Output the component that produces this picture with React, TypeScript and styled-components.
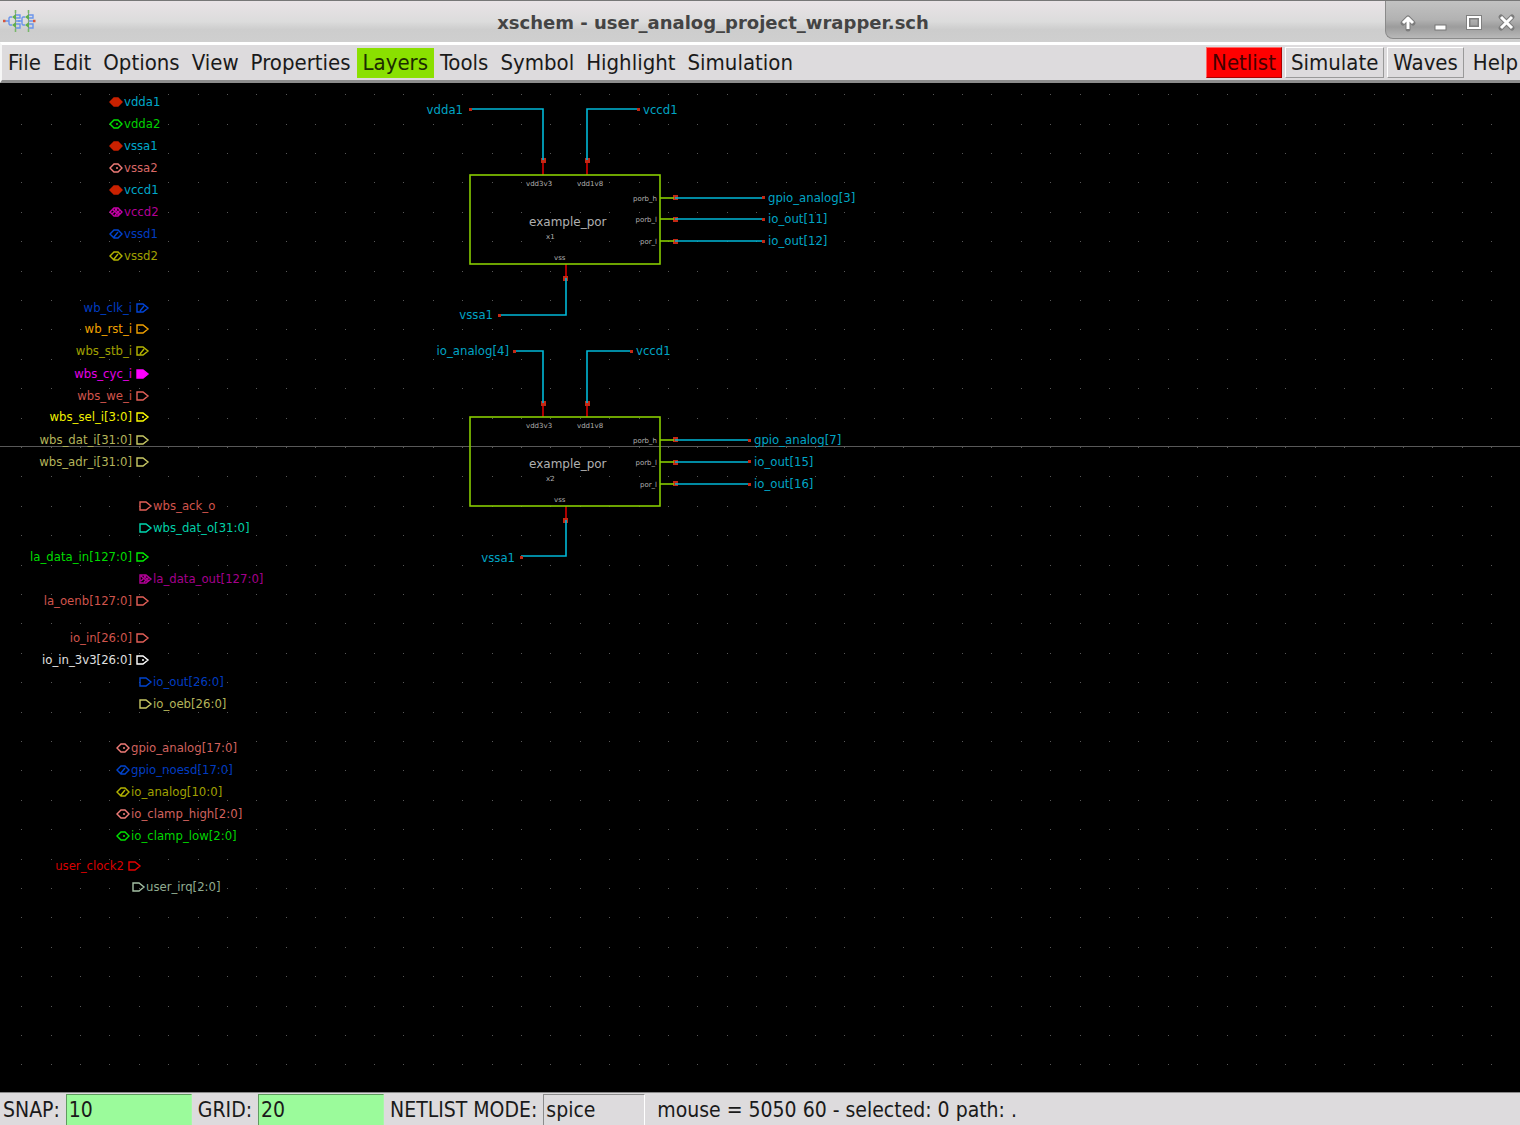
import React from "react";
import styled, { createGlobalStyle } from "styled-components";

const GlobalStyle = createGlobalStyle`
  * { box-sizing: border-box; }
  html, body { margin: 0; padding: 0; background: #000; }
  body { font-family: "DejaVu Sans Condensed", "DejaVu Sans", sans-serif; color: #1a1a1a; }
`;

const Window = styled.div`
  display: flex;
  flex-direction: column;
  min-height: 100vh;
  background: #000;
`;

const TitleBar = styled.header`
  display: flex;
  align-items: flex-start;
  height: 42px;
  background: linear-gradient(#e9e3e6 0, #dcdcdc 50%, #cdcdcd 70%, #cfcfcf 100%);
  border-top: 1px solid #777;
`;

const AppIcon = styled.svg`
  flex: none;
  width: 36px;
  height: 40px;
`;

const Title = styled.h1`
  flex: 1;
  margin: 0;
  padding-left: 5px;
  text-align: center;
  font: bold 18px/43px "DejaVu Sans", sans-serif;
  color: #444;
  white-space: nowrap;
`;

const WindowControls = styled.div`
  display: flex;
  align-items: center;
  height: 38px;
  padding-left: 8px;
  border-left: 1px solid #8a8a8a;
  border-bottom: 1px solid #8a8a8a;
  border-bottom-left-radius: 8px;
  background: linear-gradient(#c2c2c2 0, #b2b2b2 50%, #9c9c9c 70%, #b8b8b8 100%);
`;

const ControlButton = styled.button`
  width: 33px;
  height: 36px;
  padding: 0;
  border: 0;
  background: none;
  &:last-child { width: 27px; }
  svg { display: block; width: 28px; height: 36px; }
`;

const MenuBar = styled.nav`
  display: flex;
  align-items: center;
  height: 41px;
  background: #dddbdd;
  border-top: 3px solid #fff;
  border-left: 2px solid #f6f6f6;
  border-bottom: 3px solid #8c8c8c;
`;

const MenuItem = styled.button<{ $active?: boolean }>`
  height: 30px;
  margin: 0;
  padding: 0 5px;
  border: 1px solid ${(p) => (p.$active ? "#8de000" : "transparent")};
  background: ${(p) => (p.$active ? "#8ae000" : "none")};
  font: 22px/26px "DejaVu Sans Condensed", "DejaVu Sans", sans-serif;
  color: ${(p) => (p.$active ? "#1c2c00" : "#1a1a1a")};
  white-space: nowrap;
  &:last-child { padding-right: 1px; }
`;

const Spacer = styled.div`
  flex: 1;
`;

const ActionButton = styled.button<{ $alert?: boolean }>`
  height: 31px;
  margin: 0 3px 0 0;
  padding: 0 5px;
  border: 1px solid;
  border-color: ${(p) => (p.$alert ? "#f66 #a00 #a00 #f66" : "#fff #999 #999 #fff")};
  background: ${(p) => (p.$alert ? "#ff0000" : "#dddbdd")};
  font: 22px/26px "DejaVu Sans Condensed", "DejaVu Sans", sans-serif;
  color: ${(p) => (p.$alert ? "#400" : "#1a1a1a")};
  white-space: nowrap;
`;

const Canvas = styled.main`
  display: flex;
  flex: 1;
  min-height: 820px;
  overflow: hidden;
`;

const Schematic = styled.svg`
  flex: 1;
  width: 100%;
  shape-rendering: crispEdges;
`;

const PinText = styled.text`
  font: 13px "DejaVu Sans Condensed", "DejaVu Sans", sans-serif;
`;

const SymbolName = styled.text`
  font: 12px "DejaVu Sans", sans-serif;
  fill: #b0b0b0;
`;

const SymbolText = styled.text`
  font: 7px "DejaVu Sans", sans-serif;
  fill: #b0b0b0;
`;

const StatusBar = styled.footer`
  display: flex;
  align-items: flex-start;
  height: 33px;
  padding: 1px 0 0 3px;
  background: #dddbdd;
  border-top: 1px solid #888;
  font-size: 21px;
  line-height: 32px;
  white-space: nowrap;
`;

const Field = styled.input<{ $plain?: boolean; $width: number }>`
  width: ${(p) => p.$width}px;
  height: 32px;
  margin: 0 6px;
  padding: 0 2px;
  border: 1px solid;
  border-color: ${(p) => (p.$plain ? "#8c8c8c #fff #fff #8c8c8c" : "#5f9a5f #a8f8a8 #a8f8a8 #5f9a5f")};
  border-radius: 0;
  outline: 0;
  background: ${(p) => (p.$plain ? "#dddbdd" : "#9bfb9b")};
  font: 21px/30px "DejaVu Sans Condensed", "DejaVu Sans", sans-serif;
  color: #1a1a1a;
`;

const Message = styled.output`
  padding-left: 6px;
`;

/* Canvas coordinates are window coordinates with the title and menu bars taken off. */
const TOP = 83;

type Kind = "io" | "in" | "out";
type Fill = "none" | "solid" | "hatch" | "slash" | "dot";
type Pin = { kind: Kind; name: string; x: number; y: number; color: string; shape: string; fill: Fill };

const pin = (kind: Kind, name: string, x: number, y: number, color: string, shape = color, fill: Fill = "none"): Pin => ({
  kind, name, x, y, color, shape, fill,
});

const pins: Pin[] = [
  pin("io", "vdda1", 116, 102, "#00a8ca", "#c92100", "solid"),
  pin("io", "vdda2", 116, 124, "#00d000", "#00e400", "dot"),
  pin("io", "vssa1", 116, 146, "#00a8ca", "#c92100", "solid"),
  pin("io", "vssa2", 116, 168, "#d86866", "#f07c78", "dot"),
  pin("io", "vccd1", 116, 190, "#00a8ca", "#c92100", "solid"),
  pin("io", "vccd2", 116, 212, "#b40096", "#c800a8", "hatch"),
  pin("io", "vssd1", 116, 234, "#003cc0", "#0044d0", "slash"),
  pin("io", "vssd2", 116, 256, "#a0a000", "#b4b400", "slash"),
  pin("in", "wb_clk_i", 142, 308, "#003cc0", "#0044d8", "slash"),
  pin("in", "wb_rst_i", 142, 329, "#f0a000", "#f0a000"),
  pin("in", "wbs_stb_i", 142, 351, "#a0a000", "#b4b400", "slash"),
  pin("in", "wbs_cyc_i", 142, 374, "#e400e4", "#ff00ff", "solid"),
  pin("in", "wbs_we_i", 142, 396, "#d0544c", "#e46058"),
  pin("in", "wbs_sel_i[3:0]", 142, 417, "#f0f000", "#ffff00", "dot"),
  pin("in", "wbs_dat_i[31:0]", 142, 440, "#b4b45a", "#c8c864"),
  pin("in", "wbs_adr_i[31:0]", 142, 462, "#b4b45a", "#c8c864"),
  pin("out", "wbs_ack_o", 145, 506, "#d0544c", "#e46058"),
  pin("out", "wbs_dat_o[31:0]", 145, 528, "#00d0a8", "#00d8b0"),
  pin("in", "la_data_in[127:0]", 142, 557, "#00dc00", "#00f000", "dot"),
  pin("out", "la_data_out[127:0]", 145, 579, "#a4008c", "#b40098", "hatch"),
  pin("in", "la_oenb[127:0]", 142, 601, "#d0544c", "#e46058"),
  pin("in", "io_in[26:0]", 142, 638, "#d0544c", "#e46058"),
  pin("in", "io_in_3v3[26:0]", 142, 660, "#e0e0e0", "#ffffff", "dot"),
  pin("out", "io_out[26:0]", 145, 682, "#003cc0", "#0044d0"),
  pin("out", "io_oeb[26:0]", 145, 704, "#b4b45a", "#c8c864"),
  pin("io", "gpio_analog[17:0]", 123, 748, "#d0625e", "#f07c78", "dot"),
  pin("io", "gpio_noesd[17:0]", 123, 770, "#003cc0", "#0044d0", "slash"),
  pin("io", "io_analog[10:0]", 123, 792, "#a0a000", "#b4b400", "slash"),
  pin("io", "io_clamp_high[2:0]", 123, 814, "#d0625e", "#f07c78", "dot"),
  pin("io", "io_clamp_low[2:0]", 123, 836, "#00d400", "#00e400", "dot"),
  pin("in", "user_clock2", 134, 866, "#d80000", "#e40000"),
  pin("out", "user_irq[2:0]", 138, 887, "#90ac90", "#a4c0a4"),
];

const outline: Record<Kind, string> = {
  io: "M-6 0 L-2 -4 H2 L6 0 L2 4 H-2 Z",
  in: "M-5 -4 H1 L6 0 L1 4 H-5 Z",
  out: "M-5 -4 H1 L6 0 L1 4 H-5 Z",
};

const marks: Record<Fill, string> = {
  none: "",
  solid: "",
  hatch: "M-4 -3 L3 3 M-1 -3 L4 2 M-4 2 L1 -3 M-1 3 L4 -2",
  slash: "M-2 3 L2 -2",
  dot: "M0 0 H2",
};

function PinMark({ item }: { item: Pin }) {
  const left = item.kind === "in";
  return (
    <g transform={`translate(${item.x} ${item.y - TOP})`}>
      <path
        d={outline[item.kind] + marks[item.fill]}
        fill={item.fill === "solid" ? item.shape : "none"}
        stroke={item.shape}
        strokeWidth={1.4}
        shapeRendering="auto"
      />
      <PinText x={left ? -10 : 8} y={4} textAnchor={left ? "end" : "start"} fill={item.color}>
        {item.name}
      </PinText>
    </g>
  );
}

type Net = { name: string; x: number; y: number; wire: string; end?: boolean; node: [number, number]; tip: [number, number] };
type Cell = { id: string; top: number; rows: number[]; nets: Net[] };

const cells: Cell[] = [
  {
    id: "x1",
    top: 175,
    rows: [198, 219, 241],
    nets: [
      { name: "vdda1", x: 463, y: 110, end: true, wire: "M470 109 H543 V160", node: [543, 160], tip: [470, 109] },
      { name: "vccd1", x: 643, y: 110, wire: "M638 109 H587 V160", node: [587, 160], tip: [638, 109] },
      { name: "gpio_analog[3]", x: 768, y: 198, wire: "M675 198 H764", node: [675, 197], tip: [763, 197] },
      { name: "io_out[11]", x: 768, y: 219, wire: "M675 219 H764", node: [675, 219], tip: [763, 219] },
      { name: "io_out[12]", x: 768, y: 241, wire: "M675 241 H764", node: [675, 241], tip: [763, 241] },
      { name: "vssa1", x: 493, y: 315, end: true, wire: "M566 278 V315 H499", node: [565, 278], tip: [499, 315] },
    ],
  },
  {
    id: "x2",
    top: 417,
    rows: [440, 462, 484],
    nets: [
      { name: "io_analog[4]", x: 509, y: 351, end: true, wire: "M514 351 H543 V403", node: [543, 403], tip: [514, 351] },
      { name: "vccd1", x: 636, y: 351, wire: "M631 351 H587 V403", node: [587, 403], tip: [631, 351] },
      { name: "gpio_analog[7]", x: 754, y: 440, wire: "M675 440 H750", node: [675, 439], tip: [749, 440] },
      { name: "io_out[15]", x: 754, y: 462, wire: "M675 462 H750", node: [675, 462], tip: [749, 461] },
      { name: "io_out[16]", x: 754, y: 484, wire: "M675 484 H750", node: [675, 483], tip: [749, 484] },
      { name: "vssa1", x: 515, y: 558, end: true, wire: "M566 520 V556 H521", node: [565, 520], tip: [521, 557] },
    ],
  },
];

function CellMark({ cell }: { cell: Cell }) {
  const labels = ["porb_h", "porb_l", "por_l"];
  const { top } = cell;
  return (
    <g transform={`translate(0 ${-TOP})`}>
      <path d={`M543 ${top} v-14 M587 ${top} v-14 M566 ${top + 89} v14`} stroke="#d80000" strokeWidth={1.6} shapeRendering="auto" />
      <rect x={470} y={top} width={190} height={89} fill="none" stroke="#88cc00" strokeWidth={1.6} shapeRendering="auto" />
      {cell.nets.map((net) => (
        <g key={net.name}>
          <rect x={net.node[0] - 2} y={net.node[1] - 2} width={5} height={5} fill="#c42814" />
          <path d={net.wire} fill="none" stroke="#00b8d8" strokeWidth={1.6} shapeRendering="auto" />
          <rect x={net.tip[0] - 1} y={net.tip[1] - 1} width={3} height={3} fill="#c42814" />
          <PinText x={net.x} y={net.y + 4} textAnchor={net.end ? "end" : "start"} fill="#00a4c4">
            {net.name}
          </PinText>
        </g>
      ))}
      {cell.rows.map((y, i) => (
        <g key={y}>
          <path d={`M660 ${y} H674`} stroke="#88cc00" strokeWidth={1.6} shapeRendering="auto" />
          <SymbolText x={657} y={y + 3} textAnchor="end">{labels[i]}</SymbolText>
        </g>
      ))}
      <SymbolText x={526} y={top + 11}>vdd3v3</SymbolText>
      <SymbolText x={577} y={top + 11}>vdd1v8</SymbolText>
      <SymbolName x={529} y={top + 51}>example_por</SymbolName>
      <SymbolText x={546} y={top + 64}>{cell.id}</SymbolText>
      <SymbolText x={554} y={top + 85}>vss</SymbolText>
    </g>
  );
}

const gridSteps = [0, 30, 59, 88, 118];

export default function App() {
  return (
    <>
      <GlobalStyle />
      <Window>
        <TitleBar>
          <AppIcon viewBox="0 0 36 40" fill="none" aria-hidden="true">
            {[0, 13].map((dx) => (
              <g key={dx} transform={`translate(${dx} 0)`}>
                <path d="M5 20 H9 M12 16 H10 L9 17 V23 L10 24 H12 M16 14 H20 V17 H16 M16 23 H20 V27 H16 M16 20 H20" stroke="#6a94ec" strokeWidth="1.4" />
                <path d="M15.5 9 V31" stroke="#8aa08a" strokeWidth="1.2" />
                <path d="M12 16 L16 13 V19 Z M12 24 L16 21 V27 Z" fill="#5fae4c" />
                <path d="M15.5 9 V12 M15.5 28 V31" stroke="#78b868" strokeWidth="1.4" />
              </g>
            ))}
            <path d="M3 20 H5.500 M33 20 H35.500" stroke="#d8563c" strokeWidth="2.600" />
          </AppIcon>
          <Title>xschem - user_analog_project_wrapper.sch</Title>
          <WindowControls>
            <ControlButton aria-label="Shade">
              <svg viewBox="0 0 28 36" fill="none">
                <path d="M14 27 V16 M9 21 L14 16 L19 21" stroke="#7c7c7c" strokeWidth="5" strokeLinejoin="round" strokeLinecap="round" />
                <path d="M14 27 V16 M9 21 L14 16 L19 21" stroke="#fff" strokeWidth="3" strokeLinejoin="round" />
              </svg>
            </ControlButton>
            <ControlButton aria-label="Minimize">
              <svg viewBox="0 0 28 36"><rect x="8" y="23" width="11" height="5" fill="#fff" stroke="#777" /></svg>
            </ControlButton>
            <ControlButton aria-label="Maximize">
              <svg viewBox="0 0 28 36" fill="none">
                <rect x="8" y="15" width="12" height="11" stroke="#808080" strokeWidth="4" />
                <rect x="8" y="15" width="12" height="11" stroke="#fff" strokeWidth="2" />
                <rect x="10" y="17" width="8" height="7" stroke="#808080" />
              </svg>
            </ControlButton>
            <ControlButton aria-label="Close">
              <svg viewBox="0 0 28 36" fill="none">
                <path d="M8 15 L19 26 M19 15 L8 26" stroke="#7c7c7c" strokeWidth="5" strokeLinecap="round" />
                <path d="M8 15 L19 26 M19 15 L8 26" stroke="#fff" strokeWidth="3" />
              </svg>
            </ControlButton>
          </WindowControls>
        </TitleBar>
        <MenuBar>
          {["File", "Edit", "Options", "View", "Properties", "Layers", "Tools", "Symbol", "Highlight", "Simulation"].map((name) => (
            <MenuItem key={name} $active={name === "Layers"}>{name}</MenuItem>
          ))}
          <Spacer />
          <ActionButton $alert>Netlist</ActionButton>
          <ActionButton>Simulate</ActionButton>
          <ActionButton>Waves</ActionButton>
          <MenuItem>Help</MenuItem>
        </MenuBar>
        <Canvas>
          <Schematic role="img" aria-label="Schematic of user_analog_project_wrapper">
            <defs>
              <pattern id="grid" x="21" y="11" width="147" height="147" patternUnits="userSpaceOnUse">
                {gridSteps.flatMap((x) => gridSteps.map((y) => <rect key={`${x}-${y}`} x={x} y={y} width="1" height="1" fill="#585858" />))}
              </pattern>
            </defs>
            <rect width="100%" height="100%" fill="url(#grid)" />
            <rect y={446 - TOP} width="100%" height="1" fill="#585858" />
            {pins.map((item) => <PinMark key={item.name} item={item} />)}
            {cells.map((cell) => <CellMark key={cell.id} cell={cell} />)}
          </Schematic>
        </Canvas>
        <StatusBar>
          <label htmlFor="snap">SNAP:</label>
          <Field id="snap" defaultValue="10" $width={126} />
          <label htmlFor="grid-step">GRID:</label>
          <Field id="grid-step" defaultValue="20" $width={126} />
          <label htmlFor="mode">NETLIST MODE:</label>
          <Field id="mode" defaultValue="spice" $plain $width={102} />
          <Message>mouse = 5050 60 - selected: 0 path: .</Message>
        </StatusBar>
      </Window>
    </>
  );
}
